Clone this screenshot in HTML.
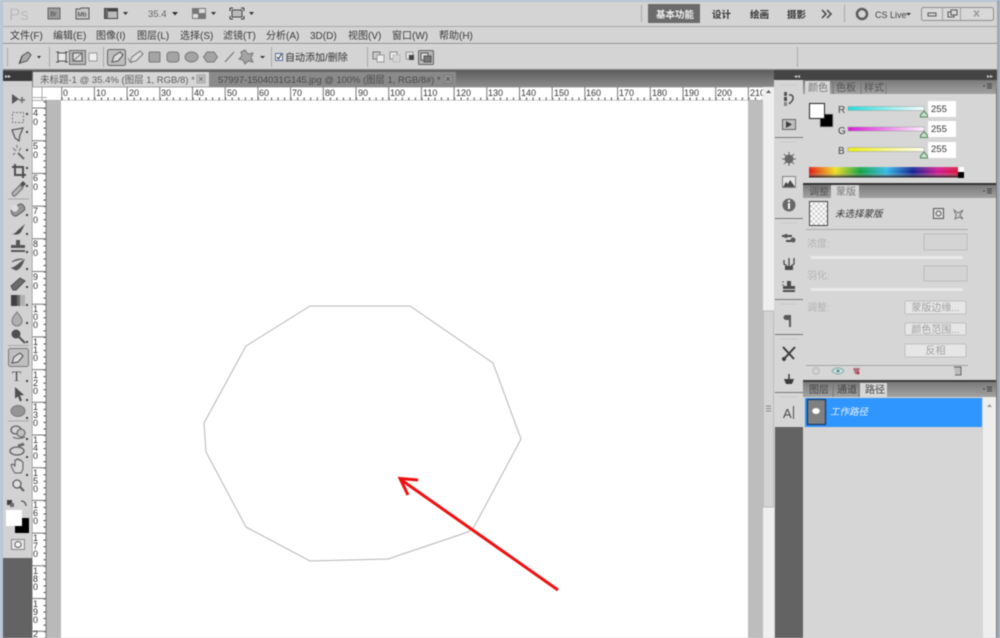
<!DOCTYPE html>
<html><head><meta charset="utf-8"><style>
html,body{margin:0;padding:0;width:1000px;height:638px;overflow:hidden;background:#d4d4d4}
svg{display:block;filter:blur(.45px)}
text{font-family:"Liberation Sans","Noto Sans CJK SC",sans-serif}
.m{font-size:10px;fill:#3a3a3a}
.r{font-size:9px;fill:#333}
.l{font-size:10px;fill:#b4b4b4}
.b{font-size:10px;fill:#a0a0a0;text-anchor:middle}
.t{font-size:9.5px;fill:#5c5c5c}
</style></head><body>
<svg width="1000" height="638" viewBox="0 0 1000 638" xmlns="http://www.w3.org/2000/svg">
<defs>
<linearGradient id="tb" x1="0" y1="0" x2="0" y2="1"><stop offset="0" stop-color="#5d5d5d"/><stop offset="1" stop-color="#8c8c8c"/></linearGradient>
<linearGradient id="tb2" x1="0" y1="0" x2="0" y2="1"><stop offset="0" stop-color="#7a7a7a"/><stop offset="1" stop-color="#a2a2a2"/></linearGradient>
<linearGradient id="rs" x1="0" x2="1"><stop offset="0" stop-color="#22dcdc"/><stop offset="1" stop-color="#f4ffff"/></linearGradient>
<linearGradient id="gs" x1="0" x2="1"><stop offset="0" stop-color="#d81bd8"/><stop offset="1" stop-color="#fff0ff"/></linearGradient>
<linearGradient id="bs" x1="0" x2="1"><stop offset="0" stop-color="#eeee10"/><stop offset="1" stop-color="#fffff0"/></linearGradient>
<linearGradient id="sp" x1="0" x2="1"><stop offset="0" stop-color="#e01010"/><stop offset=".17" stop-color="#f0e020"/><stop offset=".33" stop-color="#10a040"/><stop offset=".5" stop-color="#30b8e8"/><stop offset=".67" stop-color="#102090"/><stop offset=".83" stop-color="#d01890"/><stop offset="1" stop-color="#e01020"/></linearGradient>
<linearGradient id="spv" x1="0" y1="0" x2="0" y2="1"><stop offset="0" stop-color="#fff" stop-opacity=".15"/><stop offset=".5" stop-color="#fff" stop-opacity="0"/><stop offset="1" stop-color="#000" stop-opacity=".85"/></linearGradient>
<pattern id="tickh" x="61.7" y="87" width="6.54" height="13" patternUnits="userSpaceOnUse"><rect x="0" y="10.500" width="1" height="2.500" fill="#444"/></pattern>
<pattern id="tickv" x="32" y="108" width="14" height="6.54" patternUnits="userSpaceOnUse"><rect x="11.500" y="0" width="2.500" height="1" fill="#444"/></pattern>
<pattern id="chk" width="5" height="5" patternUnits="userSpaceOnUse"><rect width="5" height="5" fill="#fff"/><rect width="2.5" height="2.5" fill="#d0d0d0"/><rect x="2.5" y="2.5" width="2.5" height="2.5" fill="#d0d0d0"/></pattern>
</defs>

<!-- window frame -->
<rect width="1000" height="638" fill="#d4d4d4"/>
<rect width="1000" height="2" fill="#b5c3d4"/>
<rect width="3" height="638" fill="#b7c6d6"/>
<rect x="997" width="3" height="638" fill="#9aa8b8"/>

<!-- app bar -->
<text x="9" y="20" fill="#bcbcbc" style="font-size:17px">Ps</text>
<rect x="48" y="8" width="12" height="11" fill="#9a9a9a" stroke="#666"/><text x="50.5" y="16" fill="#444" style="font-size:6px">Br</text>
<path d="M76 9h4l1 -1h8v11h-13z" fill="#c4c4c4" stroke="#555"/><text x="77.5" y="16.5" fill="#333" style="font-size:6.5px">Mb</text>
<rect x="104.5" y="8.5" width="13" height="10" fill="#bbb" stroke="#444"/><rect x="105" y="9" width="12" height="2.5" fill="#444"/><rect x="105" y="9" width="3" height="9" fill="#666"/>
<path d="M123 12h5l-2.500 3z" fill="#333"/>
<text x="148" y="17" fill="#666" style="font-size:9.500px">35.4</text><path d="M172 12h6l-3 3.500z" fill="#333"/>
<rect x="192" y="8" width="14" height="11" fill="#777"/><rect x="199" y="9" width="6" height="4" fill="#ddd"/><rect x="193" y="14" width="5" height="4" fill="#ddd"/>
<path d="M211 12h5l-2.500 3z" fill="#333"/>
<rect x="232" y="10" width="10" height="7" fill="#bbb" stroke="#444"/><path d="M230 8h3M241 8h3M230 19h3M241 19h3M230 8v3M244 8v3M230 16v3M244 16v3" stroke="#333" fill="none"/>
<path d="M249 12h5l-2.500 3z" fill="#333"/>

<rect x="641" y="5" width="1" height="17" fill="#a8a8a8"/>
<rect x="648" y="4" width="52" height="19" fill="#6b6b6b"/>
<text x="656" y="18" fill="#f0f0f0" style="font-size:9.500px;font-weight:bold">基本功能</text>
<text x="712" y="18" fill="#333" style="font-size:9.500px;font-weight:bold">设计</text>
<text x="750" y="18" fill="#333" style="font-size:9.500px;font-weight:bold">绘画</text>
<text x="787" y="18" fill="#333" style="font-size:9.500px;font-weight:bold">摄影</text>
<path d="M822 10l4 4-4 4M827 10l4 4-4 4" fill="none" stroke="#444" stroke-width="1.500"/>
<rect x="844" y="5" width="1" height="17" fill="#a8a8a8"/>
<circle cx="862" cy="14" r="5" fill="none" stroke="#5c5c5c" stroke-width="2.500"/>
<text x="875" y="18" fill="#444" style="font-size:9px">CS Live</text><path d="M906 13h5l-2.500 2.500z" fill="#333"/>
<rect x="921.500" y="7.500" width="72" height="13" rx="2" fill="#d8d8d8" stroke="#8e8e8e"/>
<path d="M942.500 8v12M960.500 8v12" stroke="#a0a0a0"/>
<rect x="928" y="13" width="8" height="3" fill="none" stroke="#555"/>
<rect x="948" y="12" width="6" height="5" fill="none" stroke="#555"/><rect x="951" y="10" width="6" height="5" fill="#d8d8d8" stroke="#555"/>
<path d="M974 10.500l5 6M979 10.500l-5 6" stroke="#999" stroke-width="1.400"/>
<rect x="3" y="26" width="994" height="1" fill="#a9a9a9"/>

<!-- menu -->
<g class="m">
<text class="m" x="10" y="39">文件(F)</text><text class="m" x="53" y="39">编辑(E)</text><text class="m" x="96" y="39">图像(I)</text><text class="m" x="137" y="39">图层(L)</text><text class="m" x="180" y="39">选择(S)</text><text class="m" x="223" y="39">滤镜(T)</text><text class="m" x="266" y="39">分析(A)</text><text class="m" x="310" y="39">3D(D)</text><text class="m" x="348" y="39">视图(V)</text><text class="m" x="392" y="39">窗口(W)</text><text class="m" x="439" y="39">帮助(H)</text>
</g>
<rect x="3" y="43" width="994" height="1" fill="#8e8e8e"/>
<rect x="3" y="44" width="994" height="1" fill="#ececec" opacity=".5"/>

<!-- options -->
<rect x="7" y="48" width="1" height="18" fill="#aaa"/>
<path d="M20 63l2-7 6-4 3 3-4 6z" fill="#aaa" stroke="#555"/><path d="M22 56l-3 8" stroke="#444"/>
<path d="M37 56h4l-2 2.500z" fill="#333"/>
<rect x="49" y="47" width="1" height="20" fill="#aaa"/>
<rect x="58" y="53" width="8" height="8" fill="#e8e8e8" stroke="#555"/><path d="M56 52h3M56 62h3M65 52h3M65 62h3" stroke="#555"/>
<rect x="69.500" y="50.500" width="16" height="14" fill="#b4b4b4" stroke="#6e6e6e"/><rect x="73" y="53" width="9" height="8" fill="#ddd" stroke="#555"/><path d="M73 61l9-8" stroke="#777"/>
<rect x="89" y="53" width="8" height="8" fill="#f0f0f0" stroke="#999"/>
<rect x="103" y="47" width="1" height="20" fill="#aaa"/>
<rect x="107.500" y="49.500" width="18" height="16" rx="2" fill="#bcbcbc" stroke="#666"/>
<path d="M112 62l2-6 6-4 3 3-5 6z" fill="#ddd" stroke="#555"/>
<path d="M130 62l2-5 8-6 3 3-7 7z" fill="#ddd" stroke="#777"/><path d="M128 58c1 3 2 4 4 5" fill="none" stroke="#888"/>
<rect x="149" y="52" width="11" height="10" rx="1" fill="#a4a4a4" stroke="#777"/>
<rect x="167" y="52" width="12" height="10" rx="3" fill="#a4a4a4" stroke="#777"/>
<ellipse cx="191.500" cy="57" rx="6.500" ry="5" fill="#a4a4a4" stroke="#777"/>
<path d="M207 52h7l3.500 5-3.500 5h-7l-3.500-5z" fill="#a4a4a4" stroke="#777"/>
<path d="M225 62l9-10" stroke="#777" stroke-width="1.300"/>
<path d="M245 50l3 4 5-1-2 5 2 4-5-1-3 3-2-4-4-1 3-3-1-4z" fill="#a4a4a4" stroke="#777"/>
<path d="M260 56h5l-2.500 2.500z" fill="#333"/>
<rect x="271" y="47" width="1" height="20" fill="#aaa"/>
<rect x="275.500" y="53.500" width="7" height="7" fill="#eee" stroke="#5b6d99"/><path d="M277 57l1.500 2 3-5" fill="none" stroke="#334" />
<text x="285" y="61" fill="#333" style="font-size:10px">自动添加/删除</text>
<rect x="367" y="47" width="1" height="20" fill="#aaa"/>
<rect x="373" y="52" width="7" height="7" fill="#ccc" stroke="#777"/><rect x="377" y="55" width="7" height="7" fill="#eee" stroke="#999"/>
<rect x="390" y="52" width="7" height="7" fill="#eee" stroke="#888"/><rect x="393" y="55" width="7" height="7" fill="#d4d4d4" stroke="#bbb"/>
<rect x="406" y="52" width="7" height="7" fill="#ddd" stroke="#999"/><rect x="409" y="55" width="5" height="5" fill="#444"/>
<rect x="418.500" y="50.500" width="15" height="14" rx="1" fill="#b4b4b4" stroke="#666"/><rect x="421" y="53" width="7" height="7" fill="#ddd" stroke="#555"/><rect x="424" y="56" width="7" height="6" fill="#777" stroke="#555"/>
<rect x="797" y="47" width="1" height="20" fill="#aaa"/>
<rect x="3" y="69" width="994" height="1" fill="#8a8a8a"/>

<!-- tab row -->
<rect x="3" y="70" width="771" height="17" fill="url(#tb)"/>
<rect x="3" y="71" width="29" height="10" fill="#3a3a3a"/>
<text x="5" y="78" fill="#ddd" style="font-size:6px">▸▸</text>
<rect x="3" y="81" width="29" height="6" fill="#d0d0d0"/>
<rect x="33" y="72" width="176" height="15" fill="#d6d6d6"/>
<text x="40" y="83" class="t">未标题-1 @ 35.4% (图层 1, RGB/8) *</text>
<rect x="197" y="75" width="8" height="8" fill="#c4c4c4" stroke="#a4a4a4"/><path d="M199 77l4 4M203 77l-4 4" stroke="#777"/>
<rect x="209" y="72" width="247" height="15" fill="#8a8a8a"/>
<text x="218" y="83" fill="#4a4a4a" style="font-size:9.400px">57997-1504031G145.jpg @ 100% (图层 1, RGB/8#) *</text>
<rect x="444" y="75" width="8" height="8" fill="#999" stroke="#7c7c7c"/><path d="M446 77l4 4M450 77l-4 4" stroke="#555"/>

<!-- rulers -->
<rect x="32" y="87" width="732" height="13" fill="#fff"/>
<rect x="32" y="87" width="14" height="551" fill="#fff"/>
<rect x="61.700" y="87" width="700" height="13" fill="url(#tickh)"/>
<rect x="32" y="100" width="14" height="538" fill="url(#tickv)"/>
<path d="M32 87h732M32 100.500h732" stroke="#8a8a8a" stroke-width=".7" fill="none"/>
<path d="M46 100v538M32 87v551" stroke="#777" fill="none"/>
<path d="M42 87v14M32 97.500h15" stroke="#aaa" fill="none"/>
<path d="M61.700 87v13M94.400 87v13M127.100 87v13M159.800 87v13M192.500 87v13M225.200 87v13M257.900 87v13M290.600 87v13M323.300 87v13M356 87v13M388.700 87v13M421.400 87v13M454.100 87v13M486.800 87v13M519.500 87v13M552.200 87v13M584.900 87v13M617.600 87v13M650.300 87v13M683 87v13M715.700 87v13M748.400 87v13" stroke="#777" fill="none"/>
<g class="r">
<text class="r" x="63" y="96">0</text><text class="r" x="96" y="96">10</text><text class="r" x="129" y="96">20</text><text class="r" x="161" y="96">30</text><text class="r" x="194" y="96">40</text><text class="r" x="227" y="96">50</text><text class="r" x="259" y="96">60</text><text class="r" x="292" y="96">70</text><text class="r" x="325" y="96">80</text><text class="r" x="358" y="96">90</text><text class="r" x="390" y="96">100</text><text class="r" x="423" y="96">110</text><text class="r" x="456" y="96">120</text><text class="r" x="488" y="96">130</text><text class="r" x="521" y="96">140</text><text class="r" x="554" y="96">150</text><text class="r" x="586" y="96">160</text><text class="r" x="619" y="96">170</text><text class="r" x="652" y="96">180</text><text class="r" x="684" y="96">190</text><text class="r" x="717" y="96">200</text><text class="r" x="750" y="96">210</text>
</g>
<path d="M32 108h14M32 140.700h14M32 173.400h14M32 206.100h14M32 238.800h14M32 271.500h14M32 304.200h14M32 336.900h14M32 369.600h14M32 402.300h14M32 435h14M32 467.700h14M32 500.400h14M32 533.100h14M32 565.800h14M32 598.500h14M32 631.200h14" stroke="#777" fill="none"/>
<g class="r">
<text class="r" x="33" y="116">4</text><text class="r" x="33" y="125">0</text>
<text class="r" x="33" y="149">5</text><text class="r" x="33" y="158">0</text>
<text class="r" x="33" y="181">6</text><text class="r" x="33" y="190">0</text>
<text class="r" x="33" y="214">7</text><text class="r" x="33" y="223">0</text>
<text class="r" x="33" y="247">8</text><text class="r" x="33" y="256">0</text>
<text class="r" x="33" y="280">9</text><text class="r" x="33" y="289">0</text>
<text class="r" x="33" y="312">1</text><text class="r" x="33" y="320">0</text><text class="r" x="33" y="328">0</text>
<text class="r" x="33" y="345">1</text><text class="r" x="33" y="353">1</text><text class="r" x="33" y="361">0</text>
<text class="r" x="33" y="378">1</text><text class="r" x="33" y="386">2</text><text class="r" x="33" y="394">0</text>
<text class="r" x="33" y="410">1</text><text class="r" x="33" y="418">3</text><text class="r" x="33" y="426">0</text>
<text class="r" x="33" y="443">1</text><text class="r" x="33" y="451">4</text><text class="r" x="33" y="459">0</text>
<text class="r" x="33" y="476">1</text><text class="r" x="33" y="484">5</text><text class="r" x="33" y="492">0</text>
<text class="r" x="33" y="508">1</text><text class="r" x="33" y="516">6</text><text class="r" x="33" y="524">0</text>
<text class="r" x="33" y="541">1</text><text class="r" x="33" y="549">7</text><text class="r" x="33" y="557">0</text>
<text class="r" x="33" y="574">1</text><text class="r" x="33" y="582">8</text><text class="r" x="33" y="590">0</text>
<text class="r" x="33" y="607">1</text><text class="r" x="33" y="615">9</text><text class="r" x="33" y="623">0</text>
<text class="r" x="33" y="637">2</text>
</g>

<!-- canvas area -->
<rect x="46.500" y="100.500" width="15" height="538" fill="#b9b9b9"/>
<rect x="61" y="100.500" width="687" height="538" fill="#fff"/>
<rect x="748" y="100.500" width="15" height="538" fill="#bdbdbd"/>
<rect x="763" y="87" width="11" height="551" fill="#efefef"/>
<path d="M766 93l2.500-3 2.500 3z" fill="#555"/>
<rect x="763.500" y="311" width="10" height="196" fill="#d4d4d4" stroke="#bcbcbc"/>
<path d="M766 406h5M766 408.500h5M766 411h5" stroke="#888"/>
<path d="M310 306H410L493 363 521 439 474 527 468 532 388 559 310 561 246 527 206 452 204 423 246 346Z" fill="none" stroke="#b6b6b6" stroke-width="1"/>
<path d="M558 590L400 479M418 480L400 478.500 408 495" fill="none" stroke="#ee1111" stroke-width="3"/>

<!-- tool panel -->
<rect x="3" y="87" width="29" height="471" fill="#d2d2d2"/>
<rect x="3" y="558" width="29" height="80" fill="#636363"/>
<path d="M8 199h21M8 421h21M8 345.500h21" stroke="#a8a8a8"/>
<g fill="#444" opacity=".82">
<path d="M12 94l7 5-7 5z" fill="#3c3c3c"/><path d="M22 97v6M19 100h6" stroke="#555" stroke-width="1.500"/>
<rect x="12.500" y="112.500" width="11" height="10" fill="none" stroke="#666" stroke-dasharray="2 1.500"/>
<path d="M12 130l11-2-3 7-1 6-4-3z" fill="#ccc" stroke="#444" stroke-width="1.300"/>
<path d="M13 148l3 3M21 148l-2 3M17 145v3M13 155l2-2" stroke="#777" stroke-width="1.300"/><path d="M18 153l6 6" stroke="#555" stroke-width="2"/>
<path d="M15 164v11h11M12 167h11v11" fill="none" stroke="#333" stroke-width="2"/>
<path d="M13 196l-1-3 8-8 3 3-8 8z" fill="#aaa" stroke="#555"/><path d="M20 184l3-3 3 3-3 3z" fill="#333"/>
<rect x="11" y="206" width="14" height="8" rx="3" transform="rotate(-35 18 210)" fill="#888" stroke="#444"/><rect x="11" y="205" width="7" height="7" rx="3" transform="rotate(-35 14 208)" fill="#ddd"/>
<path d="M12 234c3 0 4-2 6-4l7-6-4 8c-2 3-6 3-9 2z" fill="#333"/>
<path d="M16 240h4v5h5v3h-14v-3h5z M11 250h14v2h-14z" fill="#3d3d3d"/>
<path d="M12 268c4-1 6-4 12-8-2 5-4 9-8 10zM12 262c4-3 8-3 11-3" fill="#3d3d3d" stroke="#3d3d3d"/>
<path d="M11 286l9-8 5 3-9 9h-3z" fill="#555" stroke="#333"/>
<rect x="11" y="295" width="14" height="11" fill="#555"/><rect x="11" y="295" width="6" height="11" fill="#222"/><rect x="20" y="295" width="5" height="11" fill="#aaa"/>
<path d="M17 312c3 4 5 6 5 9a5 5 0 0 1-10 0c0-3 2-5 5-9z" fill="#a8a8a8" stroke="#666"/>
<circle cx="16" cy="334" r="4.500" fill="#333"/><path d="M19 337l6 6" stroke="#333" stroke-width="2"/>
<rect x="8.500" y="348.500" width="20" height="18" rx="2" fill="#bcbcbc" stroke="#666"/>
<path d="M12 363l2-6 6-4 3 3-5 6z" fill="#ddd" stroke="#333"/>
<text x="12" y="381" fill="#333" style="font-size:15px;font-family:'Liberation Serif',serif">T</text>
<path d="M15 387l9 8-4 .5 2 5-2 1-2-5-3 2z" fill="#333"/>
<ellipse cx="18" cy="411" rx="7" ry="5.500" fill="#888" stroke="#666"/>
<ellipse cx="16" cy="430" rx="5" ry="4" fill="none" stroke="#444" stroke-width="1.300"/><circle cx="21" cy="433" r="4" fill="#bbb" stroke="#444"/><path d="M13 437c3 2 8 2 12 0" fill="none" stroke="#444"/>
<ellipse cx="17" cy="451" rx="7" ry="4" fill="none" stroke="#444" stroke-width="1.300"/><path d="M18 446l6-2" stroke="#555" stroke-width="3"/>
<path d="M13 470l-2-5 2-1 2 2v-6h2v-1h2v1h2v1l2 1v7l-2 4h-6z" fill="#d8d8d8" stroke="#444"/>
<circle cx="17" cy="484" r="4" fill="#e4e4e4" stroke="#444" stroke-width="1.300"/><path d="M20 487l4 4" stroke="#444" stroke-width="2"/>
<rect x="7" y="500" width="5" height="5" fill="#222"/><rect x="10" y="503" width="4" height="4" fill="#555"/>
<path d="M21 501c3 0 5 2 5 5" fill="none" stroke="#444" stroke-width="1.300"/>
<rect x="11.500" y="539.500" width="13" height="10" fill="#e8e8e8" stroke="#777"/><circle cx="18" cy="544.500" r="3" fill="#fff" stroke="#444"/>
<path d="M26 113h2v2h-2zM26 131h2v2h-2zM26 149h2v2h-2zM26 167h2v2h-2zM26 185h2v2h-2zM26 214h2v2h-2zM26 233h2v2h-2zM26 251h2v2h-2zM26 268h2v2h-2zM26 286h2v2h-2zM26 304h2v2h-2zM26 322h2v2h-2zM26 341h2v2h-2zM26 380h2v2h-2zM26 399h2v2h-2zM26 417h2v2h-2zM26 438h2v2h-2zM26 456h2v2h-2zM26 474h2v2h-2z" fill="#222"/>
</g>
<rect x="15" y="518" width="14" height="15" fill="#000"/>
<rect x="6" y="510" width="16" height="16" fill="#fff"/>

<!-- right dock -->
<rect x="774" y="70" width="223" height="10" fill="#444"/>
<text x="794" y="78" fill="#ccc" style="font-size:6px">◂◂</text>
<text x="987" y="78" fill="#ccc" style="font-size:6px">▸▸</text>
<rect x="775" y="80" width="28" height="347" fill="#d6d6d6"/>
<rect x="775" y="427" width="28" height="211" fill="#636363"/>
<path d="M775 137.500h28M775 218.500h28M775 299.500h28M775 334.500h28M775 392.500h28" stroke="#777" fill="none"/>
<path d="M780 85h18M780 142h18M780 223h18M780 304h18M780 339h18M780 397h18" stroke="#bbb" stroke-dasharray="1 1" fill="none"/>
<g opacity=".85">
<rect x="784" y="97" width="3" height="4" fill="#333"/><rect x="784" y="102" width="3" height="4" fill="#777"/><rect x="784" y="92" width="3" height="4" fill="#444"/><path d="M789 95c4-1 5 3 3 6l-3 3" fill="none" stroke="#333" stroke-width="1.500"/>
<rect x="782.500" y="119.500" width="13" height="10" fill="#bbb" stroke="#555"/><path d="M786 121l6 3.500-6 3.500z" fill="#222"/>
<circle cx="789" cy="159" r="4.500" fill="#555"/><path d="M789 152v14M782 159h14M784 154l10 10M794 154l-10 10" stroke="#555"/>
<rect x="782.500" y="176.500" width="13" height="11" fill="#e8e8e8" stroke="#777"/><path d="M783 187l3-5 2 2 2-4 3 4 2 3z" fill="#333"/>
<circle cx="789" cy="205" r="6.500" fill="#555"/><rect x="788" y="203" width="2" height="6" fill="#fff"/><rect x="788" y="200" width="2" height="2" fill="#fff"/>
<path d="M782 236h10M786 241h9" stroke="#333" stroke-width="2"/><circle cx="793" cy="240" r="2.500" fill="#444"/><circle cx="786" cy="236" r="2" fill="#444"/>
<path d="M785 266h8v4h-8z" fill="#333"/><path d="M789 258v8M784 260v4l3 2M794 258v6l-3 2" fill="none" stroke="#333" stroke-width="1.300"/>
<path d="M787 281h4v5h4v3h-12v-3h4zM783 290h12v2h-12z" fill="#333"/><path d="M782 282h2M782 285h2" stroke="#555"/>
<path d="M786 315h5v12h-2v-7h-3a2.500 2.500 0 0 1 0-5z" fill="#444"/>
<path d="M783 347l11 12M795 347l-11 12" stroke="#222" stroke-width="2"/><circle cx="784" cy="359" r="2" fill="#222"/>
<path d="M784 379h10l-2 5h-6z" fill="#222"/><path d="M789 374v6" stroke="#222" stroke-width="1.500"/>
<text x="783" y="418" fill="#333" style="font-size:13px">A</text><rect x="793" y="406" width="1" height="13" fill="#333"/>
</g>

<!-- color panel -->
<rect x="803" y="80" width="194" height="14" fill="url(#tb2)"/>
<rect x="805" y="81" width="25" height="13" fill="#d6d6d6"/>
<text x="808" y="91" fill="#777" style="font-size:10px">颜色</text>
<text x="836" y="91" fill="#555" style="font-size:10px">色板</text>
<text x="864" y="91" fill="#555" style="font-size:10px">样式</text>
<path d="M833 82v12M861 82v12M886 82v12" stroke="#777"/>
<path d="M983 86h2M987 84h5M987 86h5M987 88h5" stroke="#444"/>
<rect x="803" y="94" width="194" height="89" fill="#d6d6d6"/>
<rect x="820" y="114" width="13" height="13" fill="#000" stroke="#aaa"/>
<rect x="809.500" y="103.500" width="15" height="15" fill="#fff" stroke="#222"/>
<text x="838" y="113" fill="#444" style="font-size:10px">R</text>
<text x="838" y="134" fill="#444" style="font-size:10px">G</text>
<text x="838" y="154" fill="#444" style="font-size:10px">B</text>
<rect x="848" y="106.500" width="76" height="4" fill="url(#rs)" stroke="#999" stroke-width=".5"/>
<rect x="848" y="127" width="76" height="4" fill="url(#gs)" stroke="#999" stroke-width=".5"/>
<rect x="848" y="147.500" width="76" height="4" fill="url(#bs)" stroke="#999" stroke-width=".5"/>
<path d="M924 111l3.500 4v2h-7v-2zM924 131.500l3.500 4v2h-7v-2zM924 152l3.500 4v2h-7v-2z" fill="#c8e0c8" stroke="#4f8a5a"/>
<rect x="928" y="101" width="28" height="16" fill="#fff"/><rect x="928" y="121" width="28" height="16" fill="#fff"/><rect x="928" y="142" width="28" height="16" fill="#fff"/>
<text x="931" y="112" fill="#333" style="font-size:9.500px">255</text>
<text x="931" y="132" fill="#333" style="font-size:9.500px">255</text>
<text x="931" y="152" fill="#333" style="font-size:9.500px">255</text>
<rect x="809" y="167" width="155" height="10.500" fill="url(#sp)"/><rect x="809" y="167" width="155" height="10.500" fill="url(#spv)"/>
<rect x="958" y="167" width="6" height="5" fill="#fff"/><rect x="958" y="172" width="6" height="6" fill="#000"/>
<rect x="803" y="183" width="194" height="2" fill="#333"/>

<!-- mask panel -->
<rect x="803" y="185" width="194" height="13" fill="url(#tb2)"/>
<rect x="831" y="185" width="28" height="13" fill="#d6d6d6"/>
<text x="809" y="195" fill="#555" style="font-size:10px">调整</text>
<text x="836" y="195" fill="#777" style="font-size:10px">蒙版</text>
<path d="M983 191h2M987 189h5M987 191h5M987 193h5" stroke="#444"/>
<rect x="803" y="198" width="194" height="184" fill="#d6d6d6"/>
<rect x="809.500" y="201.500" width="18" height="24" fill="url(#chk)" stroke="#444"/>
<text x="835" y="217" fill="#333" style="font-size:9.500px;font-style:italic">未选择蒙版</text>
<rect x="933.500" y="208.500" width="10" height="10" fill="#ddd" stroke="#555"/><circle cx="938.500" cy="213.500" r="2.500" fill="none" stroke="#555"/>
<path d="M954 210l4 3 5-3-3 5 3 4-4-2-4 2 1-4z" fill="#ccc" stroke="#777"/>
<rect x="806" y="229" width="162" height="1" fill="#aaa"/>
<text class="l" x="807" y="247">浓度:</text>
<rect x="924" y="234" width="43" height="16" fill="#d4d4d4" stroke="#bbb"/>
<rect x="811" y="256" width="152" height="3" fill="#e8e8e8"/>
<text class="l" x="807" y="279">羽化:</text>
<rect x="924" y="266" width="43" height="15" fill="#d4d4d4" stroke="#bbb"/>
<rect x="811" y="288" width="152" height="3" fill="#e8e8e8"/>
<text class="l" x="807" y="311">调整:</text>
<rect x="905" y="301" width="61" height="13" rx="1" fill="#e6e6e6" stroke="#c0c0c0"/><text class="b" x="935.500" y="311">蒙版边缘...</text>
<rect x="905" y="323" width="61" height="12" rx="1" fill="#e6e6e6" stroke="#c0c0c0"/><text class="b" x="935.500" y="333">颜色范围...</text>
<rect x="905" y="344" width="61" height="13" rx="1" fill="#e6e6e6" stroke="#c0c0c0"/><text class="b" x="935.500" y="354">反相</text>
<rect x="806" y="365" width="162" height="1" fill="#a4a4a4"/>
<circle cx="816" cy="371" r="3.500" fill="#d0d0d0" stroke="#bbb"/>
<path d="M832 371c3-4 9-4 12 0-3 4-9 4-12 0z" fill="#cfe0e0" stroke="#7fa8a8"/><circle cx="838" cy="371" r="1.500" fill="#5c8a8a"/>
<path d="M853 368h7l-2 6h-3z" fill="#b07080"/><circle cx="858" cy="373" r="1.500" fill="#b04050"/>
<path d="M954 367h7v8h-6" fill="#bbb" stroke="#666"/>
<rect x="803" y="380" width="194" height="2" fill="#3c3c3c"/>

<!-- paths panel -->
<rect x="803" y="382" width="194" height="15" fill="url(#tb2)"/>
<rect x="860" y="383" width="27" height="14" fill="#d6d6d6"/>
<text x="809" y="393" fill="#444" style="font-size:10px">图层</text>
<text x="837" y="393" fill="#444" style="font-size:10px">通道</text>
<text x="865" y="393" fill="#444" style="font-size:10px">路径</text>
<path d="M833 384v13M859 384v13" stroke="#777"/>
<path d="M983 389h2M987 387h5M987 389h5M987 391h5" stroke="#444"/>
<rect x="803" y="397" width="194" height="241" fill="#d6d6d6"/>
<rect x="805" y="398" width="177" height="29" fill="#2f95ff"/>
<rect x="807.500" y="399.500" width="18" height="25" fill="#808080" stroke="#1c3c66" stroke-width="1.300"/>
<ellipse cx="816" cy="411" rx="3.800" ry="3" fill="#fff"/>
<text x="830" y="415" fill="#eef6ff" style="font-size:9.500px;font-style:italic">工作路径</text>
<rect x="983" y="397" width="14" height="241" fill="#eeeeee"/>
<path d="M987 407l2.500-3 2.500 3z" fill="#999"/>
<rect x="996" y="87" width="1" height="551" fill="#777"/>
</svg>
</body></html>
